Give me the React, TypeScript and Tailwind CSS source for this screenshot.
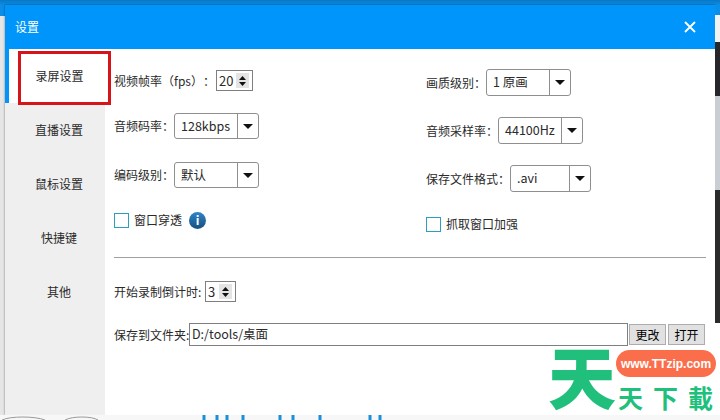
const font = "font-['Noto_Sans_CJK_SC',sans-serif]";

const menuItems = [
	{ label: '录屏设置', active: true },
	{ label: '直播设置' },
	{ label: '鼠标设置' },
	{ label: '快捷键' },
	{ label: '其他' },
];

const Arrow = () => (
	<svg width="10" height="5" viewBox="0 0 10 5">
		<path d="M0 0H10L5 5Z" fill="#111" />
	</svg>
);

const Select = ({ value, textWidth, height }: { value: string; textWidth: string; height: string }) => (
	<div className={`flex items-center rounded-[3px] border border-[#8f8f8f] bg-white ${height}`}>
		<span className={`whitespace-nowrap pl-[6px] text-[12.5px] ${textWidth}`}>{value}</span>
		<span className="h-full w-px bg-[#8f8f8f]" />
		<span className="flex w-[20px] justify-center">
			<Arrow />
		</span>
	</div>
);

const Spinner = ({ value, width }: { value: string; width: string }) => (
	<div className={`flex h-[21px] items-center justify-between border border-[#7f7f7f] bg-white pl-[2px] pr-[3px] text-[13px] ${width}`}>
		<span>{value}</span>
		<span className="flex h-[15px] w-[13px] flex-col items-center justify-center gap-[2px] bg-[#e4e4e4]">
			<svg width="7" height="4" viewBox="0 0 7 4">
				<path d="M0 4L3.5 0L7 4Z" fill="#111" />
			</svg>
			<svg width="7" height="4" viewBox="0 0 7 4">
				<path d="M0 0H7L3.5 4Z" fill="#111" />
			</svg>
		</span>
	</div>
);

const Field = ({ label, labelWidth, className, children }: { label: string; labelWidth: string; className?: string; children: React.ReactNode }) => (
	<div className={`flex items-center ${className ?? ''}`}>
		<span className={`whitespace-nowrap [text-spacing-trim:space-all] ${labelWidth}`}>{label}</span>
		{children}
	</div>
);

const App = () => {
	return (
		<div className={`relative flex h-[420px] w-[720px] flex-col overflow-hidden bg-[#e6e6e6] text-[12px] text-[#2a2a2a] ${font}`}>
			{/* Window behind the dialog */}
			<div className="h-[5px] shrink-0 bg-gradient-to-b from-[#0a78c4] to-[#0a8ee8]" />

			<div className="flex h-[410px] shrink-0">
				<div className="flex w-[5px] shrink-0 flex-col">
					<div className="h-[11px] bg-[#0a8ee8]" />
					<div className="flex-1 bg-[#e6e6e6]" />
				</div>

				{/* Dialog */}
				<div className="flex w-[710px] shrink-0 flex-col bg-white shadow-[0_0_2px_rgba(0,0,0,0.5)]">
					<div className="flex h-[44px] shrink-0 items-center justify-between bg-[#0095fb] pl-[10px] pr-[19px] text-white">
						<span>设置</span>
						<svg width="12" height="12" viewBox="0 0 12 12">
							<path d="M1 1L11 11M11 1L1 11" stroke="#fff" strokeWidth="1.8" />
						</svg>
					</div>

					<div className="flex flex-1">
						<nav className="flex w-[100px] shrink-0 flex-col bg-[#efefef]">
							{menuItems.map((item) => (
								<div
									key={item.label}
									className={
										item.active
											? 'flex h-[54px] items-center justify-center border-l-4 border-[#0095fb] bg-white pl-[5px]'
											: 'flex h-[54px] items-center justify-center pl-[8px]'
									}
								>
									{item.label}
								</div>
							))}
						</nav>

						<main className="flex flex-1 flex-col px-[9px]">
							<div className="flex h-[209px] shrink-0 border-b border-[#a0a0a0]">
								<div className="flex w-[312px] shrink-0 flex-col pt-[21px]">
									<Field label="视频帧率（fps）：" labelWidth="w-[102px]">
										<Spinner value="20" width="w-[37px]" />
									</Field>
									<Field label="音频码率：" labelWidth="w-[60px]" className="mt-[22px]">
										<Select value="128kbps" textWidth="w-[62px]" height="h-[26px]" />
									</Field>
									<Field label="编码级别：" labelWidth="w-[60px]" className="mt-[23px]">
										<Select value="默认" textWidth="w-[62px]" height="h-[26px]" />
									</Field>
									<div className="mt-[23px] flex items-center">
										<span className="h-[15px] w-[15px] border border-[#2a9fc0]" />
										<span className="ml-[5px]">窗口穿透</span>
										<span className="ml-[7px] flex h-[17px] w-[17px] items-center justify-center rounded-full bg-gradient-to-b from-[#2f86c8] to-[#164f80] text-[12px] font-bold text-white">
											i
										</span>
									</div>
								</div>
								<div className="flex flex-col pt-[20px]">
									<Field label="画质级别：" labelWidth="w-[60px]">
										<Select value="1 原画" textWidth="w-[62px]" height="h-[27px]" />
									</Field>
									<Field label="音频采样率：" labelWidth="w-[72px]" className="mt-[21px]">
										<Select value="44100Hz" textWidth="w-[62px]" height="h-[27px]" />
									</Field>
									<Field label="保存文件格式：" labelWidth="w-[84px]" className="mt-[21px]">
										<Select value=".avi" textWidth="w-[58px]" height="h-[27px]" />
									</Field>
									<div className="mt-[23px] flex items-center">
										<span className="h-[15px] w-[15px] border border-[#2a9fc0]" />
										<span className="ml-[5px]">抓取窗口加强</span>
									</div>
								</div>
							</div>

							<Field label="开始录制倒计时:" labelWidth="w-[91px]" className="mt-[23px]">
								<Spinner value="3" width="w-[31px]" />
							</Field>

							<div className="mt-[21px] flex items-center">
								<span className="w-[75px] whitespace-nowrap">保存到文件夹:</span>
								<div className="flex h-[23px] w-[439px] items-center border border-[#7f7f7f] pl-[2px] text-[12.5px]">
									D:/tools/桌面
								</div>
								<button className="ml-[1px] h-[21px] w-[37px] border border-[#adadad] bg-[#e1e1e1] text-black">更改</button>
								<button className="ml-[2px] h-[21px] w-[37px] border border-[#adadad] bg-[#e1e1e1] text-black">打开</button>
							</div>
						</main>
					</div>
				</div>

				{/* Picture behind, at the right edge */}
				<div className="flex w-[5px] shrink-0 flex-col">
					<div className="h-[10px] bg-[#0a8ee8]" />
					<div className="h-[27px] bg-[#f2f2f2]" />
					<div className="h-[54px] bg-[#26262b]" />
					<div className="h-[94px] bg-[#c9ced4]" />
					<div className="h-[133px] bg-[#2b2b2b]" />
					<div className="flex-1 bg-white" />
				</div>
			</div>

			{/* Bottom edge of the page behind */}
			<svg className="h-[5px] w-[720px] shrink-0 bg-[#f7f7f7]" viewBox="0 0 720 5">
				<path d="M2 5C10 1 35 1 45 5M65 5C72 1 92 1 98 5" fill="none" stroke="#9a9a9a" />
				<path d="M204 0V5M217 0V5M227 0V5M243 0V5M280 0V5M293 0V5M320 0V5M370 0V5M380 0V5" stroke="#1b8fd8" strokeWidth="3" />
			</svg>

			{/* Annotation box */}
			<div className="absolute left-[18px] top-[51px] h-[54px] w-[93px] border-[3px] border-[#d7141a]" />

			{/* Watermark */}
			<div className="absolute left-[548px] top-[341px] text-[68px] font-black leading-[68px] text-[#20bf7c]">天</div>
			<div className="absolute left-[616px] top-[350px] flex h-[27px] w-[100px] items-center justify-center rounded-full bg-[#fb6e4c] font-['Liberation_Sans',sans-serif] text-[12px] font-bold text-white">
				www.TTzip.com
			</div>
			<div className="absolute left-[618px] top-[382px] flex w-[95px] justify-between text-[25px] font-bold leading-[30px] text-[#20bf7c]">
				<span>天</span>
				<span>下</span>
				<span>載</span>
			</div>
		</div>
	);
};

export default App;
